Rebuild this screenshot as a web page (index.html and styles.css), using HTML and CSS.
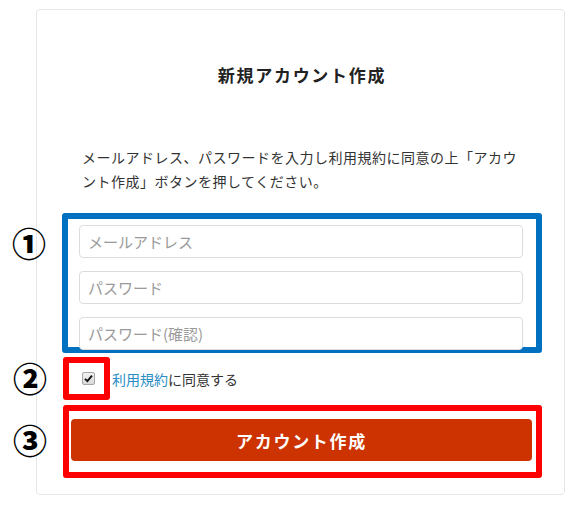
FILE: index.html
```html
<!DOCTYPE html>
<html>
<head>
  <meta charset="utf-8">
  <title>新規アカウント作成</title>
  <link rel="stylesheet" href="styles.css">
</head>
<body>
  <div class="card">
    <h1 class="card-title">新規アカウント作成</h1>
    <p class="lead">メールアドレス、パスワードを入力し利用規約に同意の上「アカウント作成」ボタンを押してください。</p>

    <div class="mark mark-blue fields">
      <span class="num">①</span>
      <div class="fields-clip">
        <input class="field" type="text" placeholder="メールアドレス">
        <input class="field" type="password" placeholder="パスワード">
        <input class="field" type="password" placeholder="パスワード(確認)">
      </div>
    </div>

    <div class="agree">
      <div class="mark mark-red check-wrap">
        <span class="num num-two">②</span>
        <span class="check">
          <svg width="9" height="9" viewBox="0 0 9 9"><path d="M1 4.8 L3.4 7.2 L8 1.6" fill="none" stroke="#111" stroke-width="1.9"/></svg>
        </span>
      </div>
      <label class="agree-text"><a href="#">利用規約</a>に同意する</label>
    </div>

    <div class="mark mark-red submit-wrap">
      <span class="num num-three">③</span>
      <button class="submit">アカウント作成</button>
    </div>
  </div>
</body>
</html>
```

FILE: styles.css
```css
html, body {
  margin: 0;
  padding: 0;
  background: #fff;
}

body {
  font-family: "Noto Sans CJK JP", "Noto Sans", sans-serif;
  color: #333;
}

.card {
  box-sizing: border-box;
  margin: 9px 0 0 36px;
  width: 529px;
  height: 486px;
  padding: 52px 22px 0 25px;
  border: 1px solid #e6e6e6;
  border-radius: 4px;
}

.card-title {
  margin: 0;
  font-size: 17px;
  line-height: 26px;
  font-weight: bold;
  letter-spacing: 1.7px;
  text-align: center;
  color: #222;
}

.lead {
  margin: 57px 19px 20px 20px;
  font-size: 14px;
  line-height: 24px;
  letter-spacing: 0.5px;
}

/* annotation boxes */
.mark {
  position: relative;
  box-sizing: border-box;
  border-width: 6px;
  border-style: solid;
  border-radius: 3px;
}

.mark-blue {
  border-color: #0070c0;
}

.mark-red {
  border-color: #ff0000;
}

.num {
  position: absolute;
  left: -57px;
  top: 9px;
  width: 36px;
  line-height: 30px;
  font-size: 34px;
  font-weight: 900;
  color: #000;
  text-align: center;
}

.num-two {
  top: 0;
}

.num-three {
  top: 14px;
}

.fields {
  height: 140px;
  padding: 6px 13px 0 11px;
}

.fields-clip {
  height: 128px;
  overflow: hidden;
}

.field {
  display: block;
  box-sizing: border-box;
  width: 100%;
  height: 33px;
  margin: 0 0 13px;
  padding: 0 8px;
  border: 1px solid #dcdcdc;
  border-radius: 4px;
  font-family: inherit;
  font-size: 15px;
  color: #333;
  outline: none;
}

.field::placeholder {
  color: #9a9a9a;
}

.agree {
  display: flex;
  align-items: center;
  margin: 4px 0 0 1px;
}

.check-wrap {
  width: 47px;
  height: 43px;
  padding: 9px 0 0 13px;
}

.check {
  display: flex;
  align-items: center;
  justify-content: center;
  box-sizing: border-box;
  width: 13px;
  height: 13px;
  border: 1px solid #a6a6a6;
  border-radius: 2px;
  background: linear-gradient(#f2f2f2, #d9d9d9);
}

.agree-text {
  margin-left: 2px;
  font-size: 14px;
  line-height: 20px;
  color: #333;
}

.agree-text a {
  color: #2a8dc5;
  text-decoration: none;
}

.submit-wrap {
  width: 479px;
  height: 73px;
  margin: 5px 0 0 1px;
  padding: 8px 0 0 2px;
}

.submit {
  display: block;
  width: 461px;
  height: 42px;
  border: none;
  border-radius: 4px;
  background: #cc3300;
  color: #fff;
  font-family: inherit;
  font-size: 17px;
  font-weight: bold;
  letter-spacing: 1.7px;
}
```
